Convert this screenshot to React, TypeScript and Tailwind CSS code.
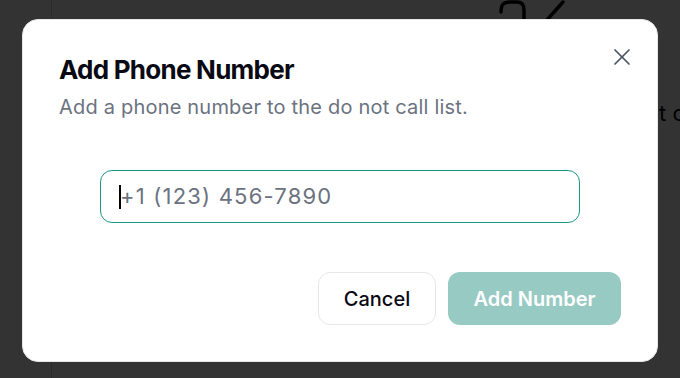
import { X } from "lucide-react";

function BackgroundPage() {
  return (
    <div className="flex h-full w-full bg-white">
      <div className="w-[52px] shrink-0 border-r border-gray-300" />
      <div className="relative flex-1">
        <svg
          className="absolute left-[444px] top-[-6px]"
          width="80"
          height="30"
          viewBox="0 0 80 30"
          fill="none"
          stroke="#000"
          strokeWidth="3.4"
          strokeLinecap="round"
        >
          <path d="M5 18 C5 10 8 8 14 8 L21 8 C26 8 28 11 28 16 L28 30" />
          <path d="M50 27 L67 8" />
        </svg>
        <p className="absolute left-[607px] top-[97px] whitespace-nowrap text-[22px] text-black">t call</p>
      </div>
    </div>
  );
}

export default function App() {
  return (
    <div
      className="relative h-[378px] w-[680px] overflow-hidden"
      style={{ fontFamily: "Inter, 'Noto Sans', sans-serif" }}
    >
      <BackgroundPage />
      <div className="absolute inset-0 bg-black/80" />

      <div className="absolute left-[22px] top-[19px] flex h-[343px] w-[636px] flex-col rounded-[16px] border border-gray-200 bg-white px-[36px] pb-[36px] pt-[34px]">
        <button className="absolute right-[21px] top-[23px] text-gray-600">
          <X className="h-[28px] w-[28px]" strokeWidth={1.5} />
        </button>

        <h2 className="text-[26px] font-bold leading-[32px] tracking-[-0.75px] text-[#0a0a14]">
          Add Phone Number
        </h2>
        <p className="mt-[7px] text-[20px] leading-[28px] tracking-[0.2px] text-[#6b7280]">
          Add a phone number to the do not call list.
        </p>

        <div className="mt-[49px] flex justify-center">
          <div className="flex h-[53px] w-[480px] items-center rounded-[12px] border border-[#1b9486] pl-[18px]">
            <span className="h-[24px] w-[2px] bg-black" />
            <span className="ml-[-1px] text-[22px] tracking-[1.2px] text-[#6b7280]">+1 (123) 456-7890</span>
          </div>
        </div>

        <div className="mt-auto flex justify-end gap-[12px]">
          <button className="h-[53px] w-[118px] rounded-[12px] border border-gray-200 bg-white text-[20px] font-medium text-[#0a0a14]">
            Cancel
          </button>
          <button className="h-[53px] w-[173px] rounded-[12px] bg-[#98cac4] text-[20px] font-semibold text-white">
            Add Number
          </button>
        </div>
      </div>
    </div>
  );
}
